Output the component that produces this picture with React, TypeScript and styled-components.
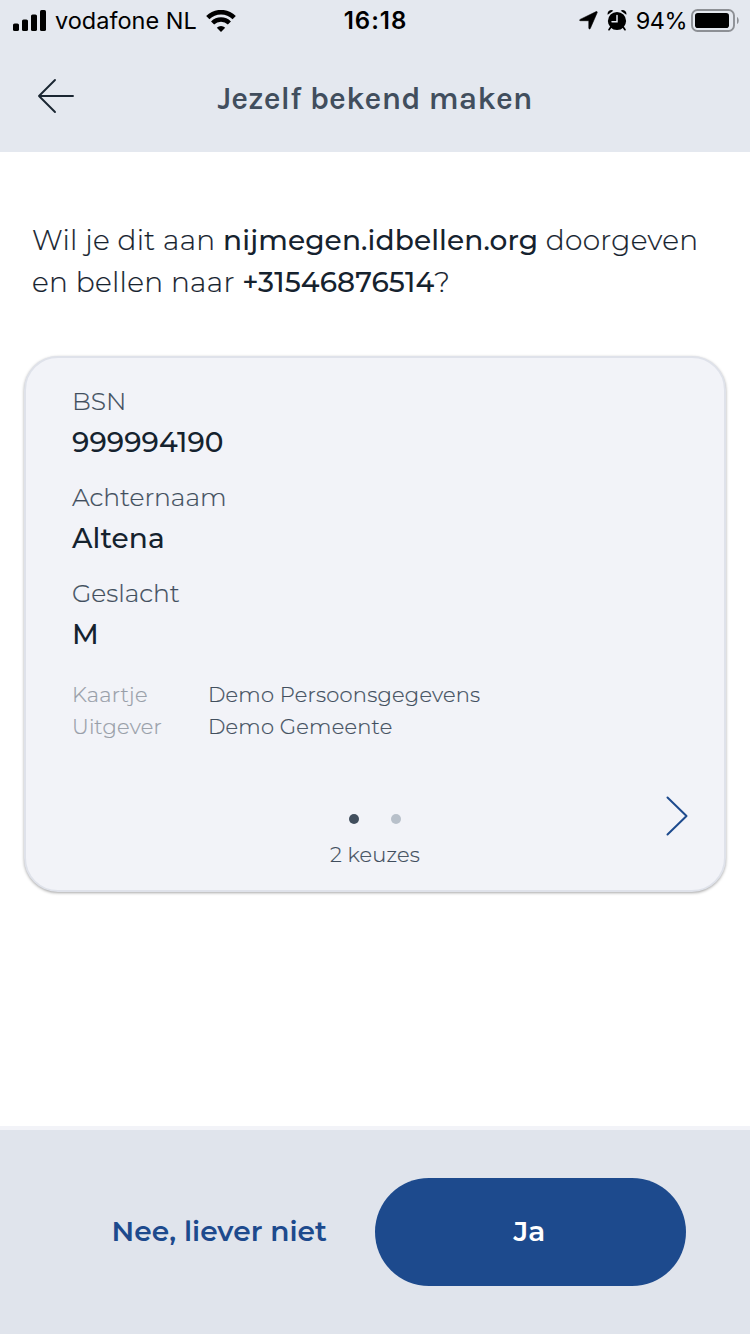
import React from "react";
import styled, { createGlobalStyle } from "styled-components";

const GlobalStyle = createGlobalStyle`
  * { box-sizing: border-box; }
  body { margin: 0; background: #fff; }
  button { border: 0; padding: 0; background: none; font: inherit; }
  svg { display: block; flex: none; }
`;

const Screen = styled.main`
  display: flex;
  flex-direction: column;
  width: 750px;
  height: 1334px;
  background: #fff;
  color: #15222e;
  font-family: Montserrat, Inter, "Liberation Sans", sans-serif;
  white-space: nowrap;
`;

const Top = styled.header`
  height: 152px;
  background: #e4e8ef;
`;

const StatusBar = styled.div`
  display: grid;
  grid-template-columns: 1fr auto 1fr;
  align-items: center;
  height: 40px;
  padding: 0 11px 0 13px;
  color: #000;
  font-family: Inter, "Liberation Sans", sans-serif;
  font-size: 23.5px;
  line-height: 40px;
`;

const StatusSide = styled.div<{ $end?: boolean }>`
  display: flex;
  align-items: center;
  justify-content: ${(p) => (p.$end ? "flex-end" : "flex-start")};
`;

const Carrier = styled.span`
  margin: 1px 9px 0 8px;
  letter-spacing: 0;
`;

const Clock = styled.span`
  margin: 1px 1px 0 0;
  font-size: 24px;
  font-weight: 600;
  letter-spacing: 1px;
`;

const Percent = styled.span`
  margin: 1px 4px 0 9px;
  letter-spacing: -0.5px;
`;

const TitleBar = styled.div`
  display: grid;
  grid-template-columns: 75px 1fr 75px;
  align-items: center;
  height: 112px;
`;

const BackButton = styled.button`
  padding-left: 37px;
`;

const Title = styled.h1`
  margin: 6px 0 0;
  color: #414e5d;
  font-family: Karla, Inter, "Liberation Sans", sans-serif;
  font-size: 32px;
  font-weight: 600;
  line-height: 36px;
  text-align: center;
`;

const Content = styled.section`
  flex: 1;
  padding: 67px 24px 0;
`;

const Question = styled.p`
  margin: 0 0 53px;
  padding-left: 8px;
  font-size: 28px;
  font-weight: 300;
  line-height: 42px;
  letter-spacing: 0.32px;
  -webkit-text-stroke: 0.2px currentColor;
`;

const Strong = styled.strong<{ $spacing: number }>`
  font-weight: 500;
  letter-spacing: ${(p) => p.$spacing}px;
  -webkit-text-stroke: 0;
`;

const Card = styled.article`
  display: flex;
  flex-direction: column;
  height: 536px;
  padding: 22px 36px 0 46px;
  border: 2px solid #dfe2ea;
  border-radius: 34px;
  background: #f2f3f8;
  box-shadow: 0 1px 3px rgba(0, 0, 0, 0.35);
`;

const Fields = styled.dl`
  display: flex;
  flex-direction: column;
  gap: 14px;
  margin: 0;
`;

const Label = styled.dt`
  color: #414e5d;
  font-size: 25px;
  font-weight: 300;
  line-height: 42px;
  -webkit-text-stroke: 0.2px currentColor;
`;

const Value = styled.dd`
  margin: 0;
  font-size: 28px;
  font-weight: 500;
  line-height: 40px;
  letter-spacing: 0.1px;
`;

const Source = styled.div`
  display: grid;
  grid-template-columns: 136px 1fr;
  margin-top: 25px;
  font-size: 21px;
  font-weight: 300;
  line-height: 32px;
  -webkit-text-stroke: 0.2px currentColor;
`;

const SourceText = styled.span<{ $muted?: boolean }>`
  color: ${(p) => (p.$muted ? "#989ea8" : "#414e5d")};
  letter-spacing: 0.24px;
  -webkit-text-stroke-color: ${(p) => (p.$muted ? "#989ea8" : "#414e5d")};
`;

const Pager = styled.div`
  display: grid;
  grid-template-columns: 40px 1fr 22px;
  align-items: start;
  margin-top: 53px;
`;

const PagerCenter = styled.div`
  grid-column: 2;
  display: flex;
  flex-direction: column;
  align-items: center;
  padding: 18px 28px 0 0;
`;

const Dots = styled.div`
  display: flex;
  gap: 32px;
`;

const Dot = styled.i<{ $active?: boolean }>`
  width: 10px;
  height: 10px;
  border-radius: 50%;
  background: ${(p) => (p.$active ? "#414e5d" : "#b8c0ca")};
`;

const Count = styled.span`
  margin-top: 19px;
  color: #414e5d;
  font-size: 21px;
  font-weight: 300;
  line-height: 24px;
  letter-spacing: 0.2px;
  -webkit-text-stroke: 0.2px currentColor;
`;

const Footer = styled.footer`
  display: flex;
  align-items: flex-start;
  justify-content: flex-end;
  gap: 48px;
  height: 208px;
  padding: 48px 64px 0 0;
  border-top: 4px solid #f2f3f8;
  background: #e0e4ec;
  font-size: 28px;
  font-weight: 600;
  line-height: 106px;
`;

const Decline = styled.button`
  color: #1d4a8d;
  letter-spacing: 0.05px;
`;

const Accept = styled.button`
  width: 311px;
  height: 108px;
  padding: 0 2px 2px 0;
  border-radius: 54px;
  background: #1d4a8d;
  color: #fff;
`;

const fields = [
  { label: "BSN", value: "999994190" },
  { label: "Achternaam", value: "Altena" },
  { label: "Geslacht", value: "M" },
];

const Signal = () => (
  <svg width="34" height="22" viewBox="0 0 34 22">
    <rect x="0" y="13.5" width="6" height="7.5" rx="1.6" />
    <rect x="9" y="9.5" width="6" height="11.5" rx="1.6" />
    <rect x="18" y="4.5" width="6" height="16.5" rx="1.6" />
    <rect x="27" y="0" width="6" height="21" rx="1.6" />
  </svg>
);

const Wifi = () => (
  <svg width="30" height="22" viewBox="0 0 30 22">
    <path d="M1.800 7.600a18.700 18.700 0 0 1 26.400 0" fill="none" stroke="#000" strokeWidth="4.600" />
    <path d="M6.600 13a11.900 11.900 0 0 1 16.800 0" fill="none" stroke="#000" strokeWidth="4.400" />
    <path d="M15 22l-4.200-4.300a6.200 6.200 0 0 1 8.400 0z" />
  </svg>
);

const Location = () => (
  <svg width="19" height="19" viewBox="0 0 19 19">
    <path d="M1.200 8.400 17.200.6c.7-.3 1.300.3 1 1L11.300 17.400c-.4.900-1.500.7-1.500-.3V9.700H1.500c-1 0-1.200-.9-.3-1.300z" stroke="#000" strokeWidth=".6" />
  </svg>
);

const Alarm = () => (
  <svg width="20" height="21" viewBox="0 0 20 21">
    <circle cx="10" cy="11" r="9.100" />
    <path d="M.7 4.700A3.700 3.700 0 0 1 6.300.7zM19.300 4.700A3.700 3.700 0 0 0 13.700.7z" />
    <path d="M3.500 17.500 2 19.700M16.500 17.500l1.500 2.200" stroke="#000" strokeWidth="1.700" strokeLinecap="round" />
    <path d="M10 5.500v6.200H5" fill="none" stroke="#e4e8ef" strokeWidth="1.500" strokeLinecap="round" />
  </svg>
);

const Battery = () => (
  <svg width="48" height="23" viewBox="0 0 48 23">
    <rect x="1" y="1" width="42" height="21" rx="5.500" fill="none" stroke="#8d9095" strokeWidth="1.900" />
    <rect x="4" y="4" width="34" height="15" rx="2.800" />
    <path d="M46 8c2.300 1 2.300 6 0 7z" fill="#8d9095" />
  </svg>
);

const StatusIcons = styled.div`
  display: flex;
  align-items: center;
  gap: 9px;
`;

export default function App() {
  return (
    <Screen>
      <GlobalStyle />
      <Top>
        <StatusBar>
          <StatusSide>
            <Signal />
            <Carrier>vodafone NL</Carrier>
            <Wifi />
          </StatusSide>
          <Clock>16:18</Clock>
          <StatusSide $end>
            <StatusIcons>
              <Location />
              <Alarm />
            </StatusIcons>
            <Percent>94%</Percent>
            <Battery />
          </StatusSide>
        </StatusBar>
        <TitleBar>
          <BackButton aria-label="Terug">
            <svg width="38" height="36" viewBox="0 0 38 36" fill="none" stroke="#1a2632" strokeWidth="1.900" strokeLinecap="round" strokeLinejoin="round">
              <path d="M18 2 2 18l16 16M2 18h34" />
            </svg>
          </BackButton>
          <Title>Jezelf bekend maken</Title>
        </TitleBar>
      </Top>
      <Content>
        <Question>
          Wil je dit aan <Strong $spacing={0.12}>nijmegen.idbellen.org</Strong> doorgeven
          <br />
          en bellen naar <Strong $spacing={0.1}>+31546876514</Strong>?
        </Question>
        <Card>
          <Fields>
            {fields.map((f) => (
              <div key={f.label}>
                <Label>{f.label}</Label>
                <Value>{f.value}</Value>
              </div>
            ))}
          </Fields>
          <Source>
            <SourceText $muted>Kaartje</SourceText>
            <SourceText>Demo Persoonsgegevens</SourceText>
            <SourceText $muted>Uitgever</SourceText>
            <SourceText>Demo Gemeente</SourceText>
          </Source>
          <Pager>
            <PagerCenter>
              <Dots>
                <Dot $active />
                <Dot />
              </Dots>
              <Count>2 keuzes</Count>
            </PagerCenter>
            <svg width="22" height="40" viewBox="0 0 22 40" fill="none" stroke="#1d4a8d" strokeWidth="2" strokeLinecap="round" strokeLinejoin="round">
              <path d="M1.500 1.500 20.500 20 1.500 38.500" />
            </svg>
          </Pager>
        </Card>
      </Content>
      <Footer>
        <Decline>Nee, liever niet</Decline>
        <Accept>Ja</Accept>
      </Footer>
    </Screen>
  );
}
